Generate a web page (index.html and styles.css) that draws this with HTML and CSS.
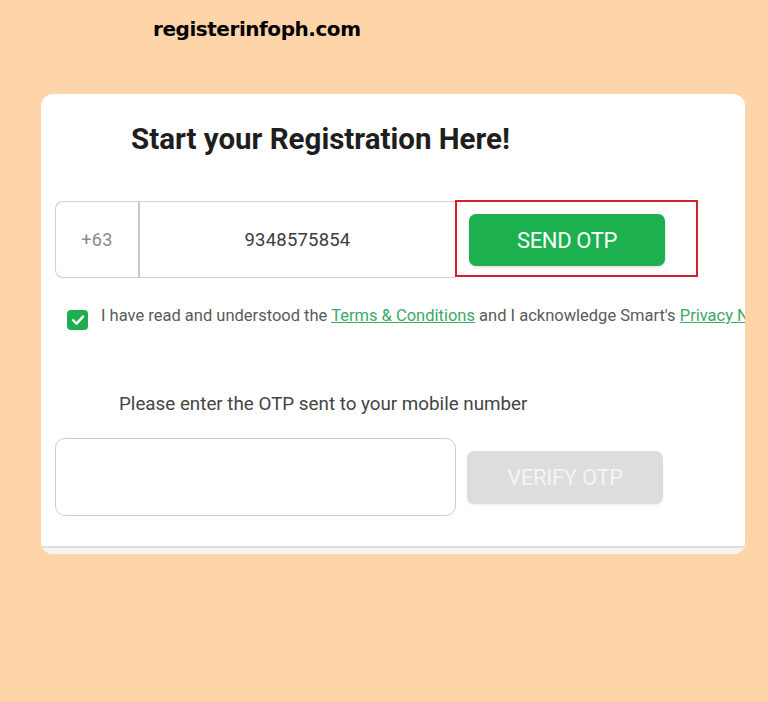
FILE: index.html
```html
<!DOCTYPE html>
<html>
<head>
<meta charset="utf-8">
<link rel="stylesheet" href="styles.css">
</head>
<body>
<div class="site">registerinfoph.com</div>
<div class="card">
  <h1 class="title">Start your Registration Here!</h1>
  <div class="row">
    <div class="phone">
      <div class="prefix">+63</div>
      <div class="number">9348575854</div>
    </div>
    <div class="highlight">
      <button class="send">SEND OTP</button>
    </div>
  </div>
  <div class="agree">
    <span class="check">
      <svg width="14" height="12" viewBox="0 0 14 12"><path d="M2 6.2 L5.6 9.6 L12 2.6" fill="none" stroke="#fff" stroke-width="2.4" stroke-linecap="round" stroke-linejoin="round"/></svg>
    </span>
    <span class="agree-text">I have read and understood the <a class="link">Terms &amp; Conditions</a> and I acknowledge Smart's <a class="link">Privacy Notice</a></span>
  </div>
  <div class="prompt">Please enter the OTP sent to your mobile number</div>
  <div class="row otp-row">
    <div class="otp-input"></div>
    <button class="verify">VERIFY OTP</button>
  </div>
  <div class="foot"></div>
</div>
</body>
</html>
```
FILE: styles.css
```css
html, body {
  margin: 0;
  padding: 0;
  background: #fed4a9;
}
body {
  width: 768px;
  height: 702px;
  overflow: hidden;
  font-family: Roboto, "Liberation Sans", sans-serif;
}
.site {
  font-family: "DejaVu Sans", sans-serif;
  font-weight: bold;
  font-size: 20px;
  color: #000;
  margin: 18px 0 0 153px;
  height: 22px;
  line-height: 22px;
  letter-spacing: -0.45px;
}
.card {
  margin: 54px 0 0 41px;
  width: 704px;
  height: 460px;
  background: #fff;
  border-radius: 12px;
  overflow: hidden;
  position: relative;
  box-sizing: border-box;
  padding: 0 0 0 14px;
  display: flex;
  flex-direction: column;
}
.title {
  margin: 29px 0 0 76px;
  font-size: 29.5px;
  font-weight: bold;
  color: #1e1e1e;
  line-height: 32px;
  letter-spacing: 0;
}
.row {
  display: flex;
  align-items: flex-start;
}
.phone {
  margin-top: 46px;
  width: 400px;
  height: 77px;
  box-sizing: border-box;
  border: 1px solid #cfcfcf;
  border-radius: 8px 0 0 8px;
  border-right: none;
  display: flex;
}
.prefix {
  width: 82px;
  border-right: 2px solid #c9c9c9;
  display: flex;
  align-items: center;
  justify-content: center;
  font-size: 18px;
  color: #8a8a8a;
  letter-spacing: 0.3px;
}
.number {
  flex: 1;
  display: flex;
  align-items: center;
  justify-content: center;
  font-size: 18.5px;
  color: #3c3c3c;
  letter-spacing: 0.2px;
}
.highlight {
  margin-top: 45px;
  width: 243px;
  height: 77px;
  box-sizing: border-box;
  border: 2px solid #d4202c;
  display: flex;
  padding: 12px 0 0 12px;
}
.send {
  width: 196px;
  height: 52px;
  background: #1cb14e;
  border: none;
  border-radius: 7px;
  color: #fff;
  font-family: Roboto, sans-serif;
  font-size: 22px;
  letter-spacing: -0.4px;
  box-shadow: 0 1px 3px rgba(0,0,0,0.15);
  padding: 0;
}
.agree {
  display: flex;
  align-items: center;
  margin: 23px 0 0 12px;
  white-space: nowrap;
}
.check {
  flex-shrink: 0;
  width: 21px;
  height: 20px;
  background: #1fae4f;
  border-radius: 4px;
  display: flex;
  align-items: center;
  justify-content: center;
  margin-top: 9px;
}
.agree-text {
  margin-left: 13px;
  font-size: 16.5px;
  color: #5a5a5a;
  letter-spacing: 0;
}
.link {
  color: #3da867;
  text-decoration: underline;
}
.prompt {
  margin: 63px 0 0 64px;
  font-size: 18.8px;
  color: #444;
  line-height: 22px;
}
.otp-row {
  margin-top: 23px;
}
.otp-input {
  width: 401px;
  height: 78px;
  box-sizing: border-box;
  border: 1.5px solid #cdcdcd;
  border-radius: 10px;
}
.verify {
  margin: 13px 0 0 11px;
  width: 196px;
  height: 53px;
  background: #dddddd;
  border: none;
  border-radius: 7px;
  color: #f4f4f4;
  font-family: Roboto, sans-serif;
  font-size: 22px;
  letter-spacing: -0.3px;
  box-shadow: 0 1px 2px rgba(0,0,0,0.08);
  padding: 0;
}
.foot {
  position: absolute;
  left: 0;
  right: 0;
  bottom: 0;
  height: 6px;
  border-top: 2px solid #dcdcdc;
  background: #f4f4f4;
}
```
